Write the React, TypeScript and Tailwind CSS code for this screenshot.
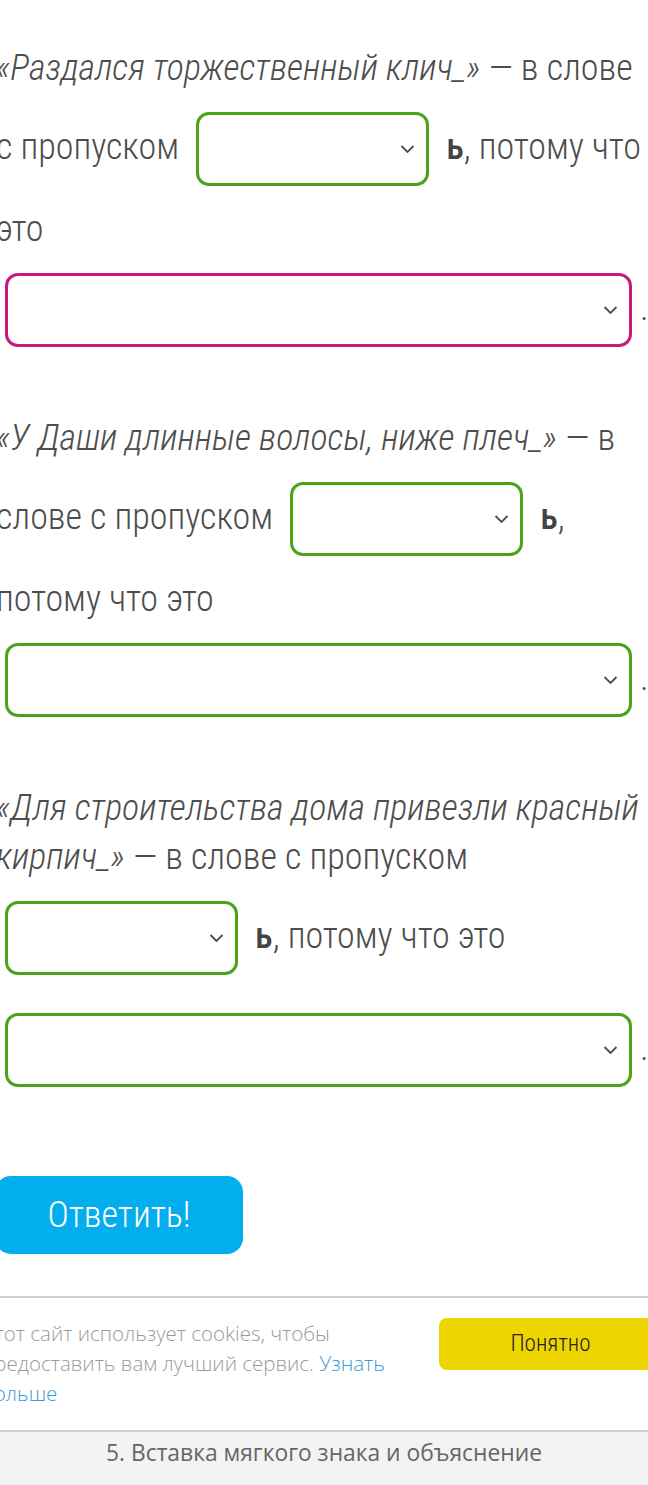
import React from "react";

const Chevron = () => (
  <svg
    className="absolute right-[11px] top-1/2 -translate-y-1/2"
    width="15"
    height="9"
    viewBox="0 0 15 9"
    fill="none"
  >
    <path d="M1.5 1.5 L7.5 7.5 L13.5 1.5" stroke="#4d4d4d" strokeWidth="1.8" />
  </svg>
);

type GapProps = { wide?: boolean; tone?: "ok" | "bad" };

// Dropdown placeholder sitting inside the sentence
const Gap: React.FC<GapProps> = ({ wide = false, tone = "ok" }) => (
  <span
    className={
      "relative inline-block align-middle my-[19px] h-[74px] rounded-[13px] border-[3px] bg-white " +
      (wide ? "w-[627px] ml-[9px] mr-[8px] " : "w-[233px] mx-[9px] ") +
      (tone === "bad" ? "border-[#c8197a]" : "border-[#4aa31b]")
    }
  >
    <Chevron />
  </span>
);

const Soft = () => <b className="font-medium text-[#444]">ь</b>;

export default function App() {
  return (
    <div className="w-[648px] min-h-[1485px] bg-white overflow-hidden">
      <div className="ml-[-4px] w-[658px] pt-[44px] text-[36px] leading-[49px] font-light text-[#4d4d4d] font-['Roboto_Condensed','Roboto',sans-serif]">
        <p>
          <i>«Раздался торжественный клич_»</i> — в слове с пропуском <Gap /> <Soft />, потому что это{" "}
          <Gap wide tone="bad" />.
        </p>
        <p className="mt-[48px]">
          <i>«У Даши длинные волосы, ниже плеч_»</i> — в слове с пропуском <Gap /> <Soft />, потому что это{" "}
          <Gap wide />.
        </p>
        <p className="mt-[48px]">
          <i>«Для строительства дома привезли красный кирпич_»</i> — в слове с пропуском <Gap /> <Soft />, потому
          что это <Gap wide />.
        </p>

        <button className="mt-[70px] ml-[-1px] w-[248px] h-[78px] rounded-[16px] bg-[#03aeef] text-white text-[36px] font-light">
          Ответить!
        </button>
      </div>

      <div className="mt-[42px] border-t-2 border-[#d2d2d2]">
        <div className="flex items-start justify-between pt-[20px] pb-[22px]">
          <p className="ml-[-18px] w-[420px] text-[20.5px] leading-[30px] text-[#9a9a9a] font-['Open_Sans',sans-serif] font-light">
            Этот сайт использует cookies, чтобы предоставить вам лучший сервис.{" "}
            <a className="text-[#3a9ad9]">Узнать больше</a>
          </p>
          <button className="mr-[-14px] w-[223px] h-[52px] rounded-[8px] bg-[#efd500] text-[23px] text-[#222] font-light font-['Roboto_Condensed','Roboto',sans-serif]">
            Понятно
          </button>
        </div>
        <div className="border-t-2 border-[#d2d2d2] bg-[#f3f3f3] h-[56px] pt-[5px] text-center leading-[31px] font-['Open_Sans',sans-serif] text-[22.8px] text-[#666]">
          5. Вставка мягкого знака и объяснение
        </div>
      </div>
    </div>
  );
}
